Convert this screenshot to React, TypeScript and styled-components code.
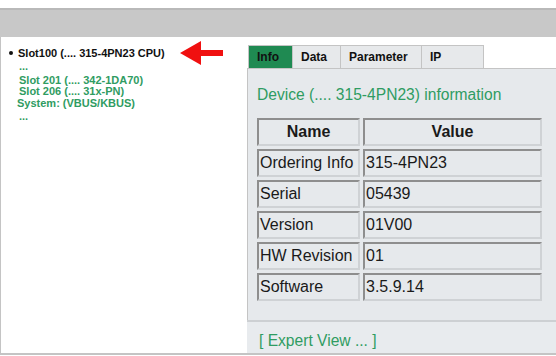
import React from 'react';
import styled, { createGlobalStyle } from 'styled-components';

const Global = createGlobalStyle`
  html, body { margin: 0; padding: 0; background: #fff; }
  body { font-family: "Liberation Sans", Arial, sans-serif; }
`;

const green = '#2f9c62';

const Page = styled.div`
  width: 556px;
  height: 356px;
  padding-top: 8px;
  box-sizing: border-box;
  display: flex;
  flex-direction: column;
  overflow: hidden;
`;

const TopBar = styled.div`
  height: 27px;
  background: #c8c8c8;
  border-top: 2px solid #b9b9b9;
`;

const Main = styled.div`
  height: 316px;
  display: flex;
  border-left: 1px solid #c4c4c4;
  border-bottom: 2px solid #c4c4c4;
`;

const Tree = styled.div`
  width: 246px;
  padding: 9px 0 0 8px;
  box-sizing: border-box;
`;

const RootItem = styled.div`
  display: flex;
  align-items: center;
  font-size: 11px;
  font-weight: bold;
  color: #111;
  height: 14px;
`;

const Bullet = styled.span`
  width: 4px;
  height: 4px;
  border-radius: 50%;
  background: #111;
  margin-right: 5px;
`;

const Arrow = styled.svg`
  flex-shrink: 0;
  margin-left: 15px;
`;

const Children = styled.div`
  padding-left: 10px;
  margin-top: 1px;
`;

const Child = styled.div<{ $shift?: number; $gap?: number }>`
  font-size: 11px;
  font-weight: bold;
  color: ${green};
  line-height: 11.5px;
  margin-left: ${p => p.$shift ?? 0}px;
  margin-top: ${p => p.$gap ?? 0}px;
`;

const Right = styled.div`
  flex: 1;
  display: flex;
  flex-direction: column;
  padding-top: 8px;
`;

const Tabs = styled.div`
  display: flex;
  height: 23px;
  padding-left: 1px;
`;

const Tab = styled.div<{ $active?: boolean; $w: number }>`
  width: ${p => p.$w}px;
  box-sizing: border-box;
  background: ${p => (p.$active ? '#1f8a52' : '#e7e9eb')};
  border: 1px solid #c4c4c4;
  border-bottom: none;
  border-left: ${p => (p.$active ? '1px solid #c4c4c4' : 'none')};
  font-size: 12px;
  font-weight: bold;
  color: #111;
  padding: 4px 0 0 8px;
`;

const Panel = styled.div`
  height: 252px;
  background: #e6e9ec;
  border-top: 1px solid #c4c4c4;
  border-left: 1px solid #c4c4c4;
  box-sizing: border-box;
  padding: 17px 0 0 9px;
`;

const Heading = styled.div`
  font-size: 15.6px;
  color: ${green};
  margin-bottom: 14px;
`;

const Table = styled.table`
  border-collapse: separate;
  border-spacing: 3px;
  margin-left: -3px;
  margin-top: -3px;
`;

const Cell = styled.td<{ $head?: boolean; $w: number }>`
  width: ${p => p.$w}px;
  height: 28px;
  box-sizing: border-box;
  padding: 0 1px;
  border: 2px solid;
  border-color: #8e8e8e #cfd2d5 #cfd2d5 #8e8e8e;
  font-size: 16px;
  color: #1a1a1a;
  font-weight: ${p => (p.$head ? 'bold' : 'normal')};
  text-align: ${p => (p.$head ? 'center' : 'left')};
  vertical-align: middle;
`;

const Footer = styled.div`
  flex: 1;
  background: #e8ebee;
  border-top: 2px solid #cdd0d3;
  padding: 10px 0 0 12px;
  font-size: 15.6px;
  color: ${green};
`;

const rows: [string, string][] = [
  ['Ordering Info', '315-4PN23'],
  ['Serial', '05439'],
  ['Version', '01V00'],
  ['HW Revision', '01'],
  ['Software', '3.5.9.14'],
];

export default function App() {
  return (
    <Page>
      <Global />
      <TopBar />
      <Main>
        <Tree>
          <RootItem>
            <Bullet />
            Slot100 (.... 315-4PN23 CPU)
            <Arrow width="44" height="24" viewBox="0 0 44 24">
              <polygon points="0,12 21,0 21,9 43,9 43,15 21,15 21,24" fill="#f01010" />
            </Arrow>
          </RootItem>
          <Children>
            <Child>...</Child>
            <Child $gap={2}>Slot 201 (.... 342-1DA70)</Child>
            <Child>Slot 206 (.... 31x-PN)</Child>
            <Child $shift={-2}>System: (VBUS/KBUS)</Child>
            <Child $gap={2}>...</Child>
          </Children>
        </Tree>
        <Right>
          <Tabs>
            <Tab $active $w={45}>Info</Tab>
            <Tab $w={48}>Data</Tab>
            <Tab $w={81}>Parameter</Tab>
            <Tab $w={62}>IP</Tab>
          </Tabs>
          <Panel>
            <Heading>Device (.... 315-4PN23) information</Heading>
            <Table>
              <tbody>
                <tr>
                  <Cell $head $w={103}>Name</Cell>
                  <Cell $head $w={179}>Value</Cell>
                </tr>
                {rows.map(([k, v]) => (
                  <tr key={k}>
                    <Cell $w={103}>{k}</Cell>
                    <Cell $w={179}>{v}</Cell>
                  </tr>
                ))}
              </tbody>
            </Table>
          </Panel>
          <Footer>[ Expert View ... ]</Footer>
        </Right>
      </Main>
    </Page>
  );
}
